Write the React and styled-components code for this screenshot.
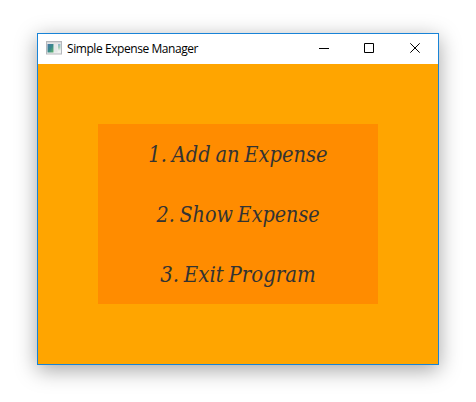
import React from "react";
import styled, { createGlobalStyle } from "styled-components";

const GlobalStyle = createGlobalStyle`
  * { box-sizing: border-box; }
  body { margin: 0; background: #fff; overflow: hidden; }
`;

const Desktop = styled.div`
  height: 402px;
  padding: 33px 37px;
`;

const Window = styled.main`
  width: 402px;
  height: 332px;
  border: 1px solid #1883d7;
  box-shadow: 0 5px 20px rgba(0, 0, 0, 0.36);
  background: #ffa500;
`;

const TitleBar = styled.header`
  display: flex;
  align-items: center;
  height: 30px;
  padding-left: 8px;
  background: #fff;
`;

const AppIcon = styled.svg`
  width: 16px;
  height: 14px;
  margin-bottom: 2px;
`;

const Title = styled.h1`
  flex: 1;
  margin: 0 0 0 5px;
  color: #000;
  font: 400 12px/16px "Open Sans", sans-serif;
  letter-spacing: ${(p) => p.$tracking}px;
  white-space: nowrap;
`;

const Controls = styled.div`
  display: flex;
  height: 30px;
`;

const ControlButton = styled.button`
  display: grid;
  place-items: start center;
  width: ${(p) => p.$width}px;
  height: 30px;
  padding: 9px 0 0;
  border: 0;
  background: transparent;
`;

const Glyph = styled.svg`
  width: 11px;
  height: 11px;
  fill: none;
  stroke: #000;
`;

const Content = styled.section`
  padding: 60px;
`;

const Menu = styled.nav`
  display: grid;
  grid-template-rows: repeat(3, 60px);
  background: #ff8c00;
`;

const MenuItem = styled.button`
  padding: 2px 0 0;
  border: 0;
  background: transparent;
  color: #333;
  font: italic 400 22px/58px "DejaVu Serif Condensed", "DejaVu Serif", serif;
  word-spacing: -1.5px;
  white-space: nowrap;
`;

const Label = styled.span`
  display: inline-block;
  transform: scaleX(${(p) => p.$stretch});
`;

const items = [
  { label: "1. Add an Expense", stretch: 0.985 },
  { label: "2. Show Expense", stretch: 0.97 },
  { label: "3. Exit Program", stretch: 1 },
];

export default function App() {
  return (
    <>
      <GlobalStyle />
      <Desktop>
        <Window>
          <TitleBar>
            <AppIcon viewBox="0 0 16 14">
              <defs>
                <linearGradient id="pane" x1="0" y1="0" x2="1" y2="1">
                  <stop offset="0" stopColor="#4777a8" />
                  <stop offset="0.5" stopColor="#38888a" />
                  <stop offset="1" stopColor="#65b56c" />
                </linearGradient>
                <linearGradient id="side" x1="0" y1="0" x2="0" y2="1">
                  <stop offset="0" stopColor="#8fb4cf" />
                  <stop offset="0.4" stopColor="#a5cfb4" />
                  <stop offset="0.8" stopColor="#f0f3f1" />
                </linearGradient>
              </defs>
              <rect x="0.5" y="0.5" width="15" height="12.5" fill="#f0f0f0" stroke="#b5b8bc" />
              <rect x="1" y="1" width="14" height="1.5" fill="#d5d7da" />
              <rect x="1.5" y="3" width="6" height="8.5" fill="url(#pane)" />
              <rect x="8" y="3" width="3.5" height="8.5" fill="#e4e8e8" />
              <rect x="12" y="3" width="2.5" height="8.5" fill="url(#side)" />
            </AppIcon>
            <Title $tracking={-0.43}>Simple Expense Manager</Title>
            <Controls>
              <ControlButton $width={45} aria-label="Minimize">
                <Glyph viewBox="0 0 11 11"><path d="M0 5.5H10" /></Glyph>
              </ControlButton>
              <ControlButton $width={45} aria-label="Maximize">
                <Glyph viewBox="0 0 11 11"><path d="M.5 .5H9.5V9.5H.5Z" /></Glyph>
              </ControlButton>
              <ControlButton $width={46} aria-label="Close">
                <Glyph viewBox="0 0 11 11"><path d="M.3 .3L9.7 9.7M9.7 .3L.3 9.7" /></Glyph>
              </ControlButton>
            </Controls>
          </TitleBar>
          <Content>
            <Menu>
              {items.map((item) => (
                <MenuItem key={item.label}><Label $stretch={item.stretch}>{item.label}</Label></MenuItem>
              ))}
            </Menu>
          </Content>
        </Window>
      </Desktop>
    </>
  );
}
